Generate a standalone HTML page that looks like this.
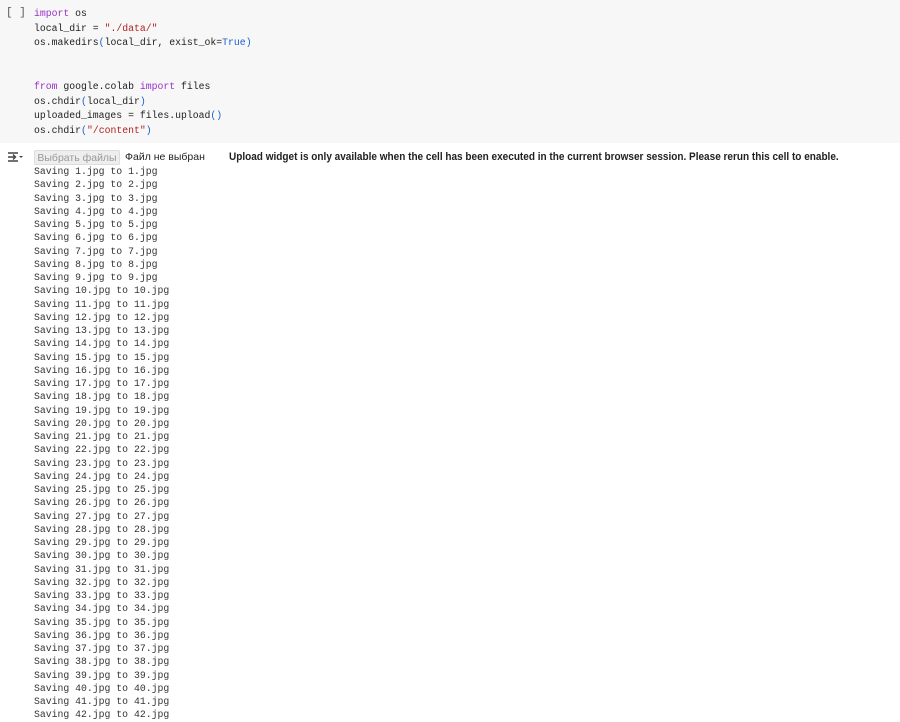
<!DOCTYPE html>
<html><head><meta charset="utf-8"><style>
body{margin:0;width:900px;height:713px;overflow:hidden;background:#fff;font-family:"Liberation Mono",monospace;}
.code{position:absolute;left:0;top:0;width:900px;height:143px;background:#f7f7f7;}
.br{position:absolute;left:6px;top:7px;font-size:11px;color:#555;}
pre{margin:0;font-family:"Liberation Mono",monospace;}
.src{position:absolute;left:34px;top:7px;font-size:9.8px;line-height:14.6px;color:#222;}
.k{color:#9b30c8}.s{color:#b22222}.b{color:#1a5fd0}.p{color:#1a5fd0}
.out{position:absolute;left:34px;top:165px;font-size:9.8px;line-height:13.25px;color:#333;}
.btn{position:absolute;left:34px;top:150px;width:86px;height:15px;background:#eee;border:1px solid #ddd;border-radius:2px;font:10.5px "Liberation Sans",sans-serif;color:#999;line-height:15px;text-align:center;box-sizing:border-box;}
.nf{position:absolute;left:125px;top:151px;font:10.5px "Liberation Sans",sans-serif;color:#222;}
.msg{position:absolute;left:229px;top:151px;font:bold 11px "Liberation Sans",sans-serif;color:#222;white-space:nowrap;transform:scaleX(0.91);transform-origin:0 0;}
</style></head><body>
<div class="code"></div>
<div class="br">[ ]</div>
<pre class="src"><span class="k">import</span> os
local_dir = <span class="s">"./data/"</span>
os.makedirs<span class="p">(</span>local_dir, exist_ok=<span class="b">True</span><span class="p">)</span>


<span class="k">from</span> google.colab <span class="k">import</span> files
os.chdir<span class="p">(</span>local_dir<span class="p">)</span>
uploaded_images = files.upload<span class="p">()</span>
os.chdir<span class="p">(</span><span class="s">"/content"</span><span class="p">)</span></pre>
<svg style="position:absolute;left:7px;top:151px" width="16" height="12" viewBox="0 0 16 12"><path d="M1 2h10M1 10h10M1 6h7M6 3.5l2.5 2.5L6 8.5" stroke="#444" stroke-width="1.4" fill="none"/><path d="M12 5h4l-2 2z" fill="#444"/></svg>
<div class="btn">Выбрать файлы</div>
<div class="nf">Файл не выбран</div>
<div class="msg">Upload widget is only available when the cell has been executed in the current browser session. Please rerun this cell to enable.</div>
<pre class="out">Saving 1.jpg to 1.jpg
Saving 2.jpg to 2.jpg
Saving 3.jpg to 3.jpg
Saving 4.jpg to 4.jpg
Saving 5.jpg to 5.jpg
Saving 6.jpg to 6.jpg
Saving 7.jpg to 7.jpg
Saving 8.jpg to 8.jpg
Saving 9.jpg to 9.jpg
Saving 10.jpg to 10.jpg
Saving 11.jpg to 11.jpg
Saving 12.jpg to 12.jpg
Saving 13.jpg to 13.jpg
Saving 14.jpg to 14.jpg
Saving 15.jpg to 15.jpg
Saving 16.jpg to 16.jpg
Saving 17.jpg to 17.jpg
Saving 18.jpg to 18.jpg
Saving 19.jpg to 19.jpg
Saving 20.jpg to 20.jpg
Saving 21.jpg to 21.jpg
Saving 22.jpg to 22.jpg
Saving 23.jpg to 23.jpg
Saving 24.jpg to 24.jpg
Saving 25.jpg to 25.jpg
Saving 26.jpg to 26.jpg
Saving 27.jpg to 27.jpg
Saving 28.jpg to 28.jpg
Saving 29.jpg to 29.jpg
Saving 30.jpg to 30.jpg
Saving 31.jpg to 31.jpg
Saving 32.jpg to 32.jpg
Saving 33.jpg to 33.jpg
Saving 34.jpg to 34.jpg
Saving 35.jpg to 35.jpg
Saving 36.jpg to 36.jpg
Saving 37.jpg to 37.jpg
Saving 38.jpg to 38.jpg
Saving 39.jpg to 39.jpg
Saving 40.jpg to 40.jpg
Saving 41.jpg to 41.jpg
Saving 42.jpg to 42.jpg</pre>
</body></html>
